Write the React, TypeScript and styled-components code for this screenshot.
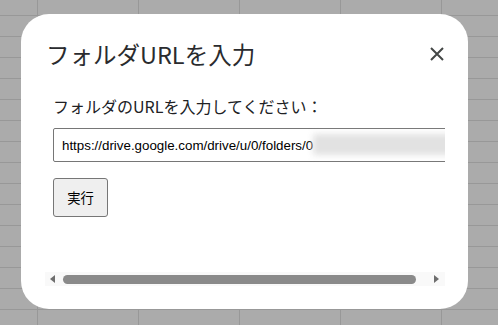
import React from "react";
import styled, { createGlobalStyle } from "styled-components";

const Global = createGlobalStyle`
  html, body { margin: 0; padding: 0; }
  body {
    width: 498px;
    height: 325px;
    overflow: hidden;
    background-color: #ababab;
    background-image:
      linear-gradient(to right, #989898 0 1px, transparent 1px),
      linear-gradient(to bottom, #989898 0 1px, transparent 1px);
    background-size: 101px 21px, 101px 21px;
    background-position: 37px 15px, 37px 15px;
    font-family: "Noto Sans CJK JP", "Noto Sans", sans-serif;
  }
`;

const Page = styled.div`
  width: 498px;
  height: 325px;
  box-sizing: border-box;
  padding: 14px 0 0 21px;
  display: flex;
  align-items: flex-start;
`;

const Dialog = styled.div`
  width: 447px;
  height: 295px;
  box-sizing: border-box;
  background: #fff;
  border-radius: 28px;
  padding: 24px 23px 23px 24px;
  display: flex;
  flex-direction: column;
`;

const Header = styled.div`
  height: 32px;
  display: flex;
  align-items: center;
  justify-content: space-between;
`;

const Title = styled.h2`
  margin: 0;
  padding-left: 1px;
  font-family: "Noto Sans CJK JP", sans-serif;
  font-weight: 400;
  font-size: 23.5px;
  line-height: 32px;
  color: #2a2b2e;
`;

const CloseButton = styled.button`
  width: 24px;
  height: 24px;
  padding: 0;
  margin-right: -4px;
  border: none;
  background: transparent;
  display: flex;
  align-items: center;
  justify-content: center;
  cursor: pointer;
`;

const Frame = styled.div`
  margin-top: 16px;
  flex: 1;
  display: flex;
  flex-direction: column;
  overflow: hidden;
`;

const Content = styled.div`
  flex: 1;
  overflow: hidden;
  padding: 8px;
`;

const Label = styled.p`
  margin: 0;
  font-family: "Noto Sans CJK JP", sans-serif;
  font-size: 16px;
  line-height: 24px;
  color: #202124;
  white-space: nowrap;
`;

const InputWrap = styled.div`
  position: relative;
  margin-top: 10px;
  width: 412px;
`;

const UrlInput = styled.input`
  display: block;
  width: 100%;
  height: 34px;
  box-sizing: border-box;
  border: 1px solid #767676;
  border-radius: 2px;
  padding: 0 8px;
  font-family: "Liberation Sans", Arial, sans-serif;
  font-size: 13.33px;
  color: #000;
  background: #fff;
  outline: none;
`;

const Redaction = styled.span`
  position: absolute;
  left: 260px;
  top: 6px;
  width: 140px;
  height: 21px;
  background: #e2e2e2;
  filter: blur(3px);
`;

const RunButton = styled.button`
  display: block;
  margin-top: 16px;
  width: 55px;
  height: 39px;
  box-sizing: border-box;
  background: #efefef;
  border: 1px solid #767676;
  border-radius: 3px;
  font-family: "Noto Sans CJK JP", sans-serif;
  font-size: 13.33px;
  color: #000;
  padding: 0;
`;

const ScrollBar = styled.div`
  height: 14px;
  flex: none;
  background: #f9f9f9;
  display: flex;
  align-items: center;
  padding: 0 6px 0 5px;
  gap: 8px;
`;

const Arrow = styled.span<{ $dir: "left" | "right" }>`
  width: 0;
  height: 0;
  border-top: 4px solid transparent;
  border-bottom: 4px solid transparent;
  ${(p) =>
    p.$dir === "left"
      ? "border-right: 5px solid #6e6e6e;"
      : "border-left: 5px solid #6e6e6e;"}
`;

const Track = styled.div`
  flex: 1;
  height: 9px;
  display: flex;
  padding-right: 10px;
`;

const Thumb = styled.div`
  flex: 1;
  height: 9px;
  border-radius: 5px;
  background: #8a8a8a;
`;

export default function App() {
  return (
    <>
      <Global />
      <Page>
        <Dialog>
          <Header>
            <Title>フォルダURLを入力</Title>
            <CloseButton aria-label="閉じる">
              <svg width="14" height="14" viewBox="0 0 14 14">
                <path d="M1 1 L13 13 M13 1 L1 13" stroke="#444746" strokeWidth="2" />
              </svg>
            </CloseButton>
          </Header>
          <Frame>
            <Content>
              <Label>フォルダのURLを入力してください：</Label>
              <InputWrap>
                <UrlInput readOnly value="https://drive.google.com/drive/u/0/folders/0" />
                <Redaction />
              </InputWrap>
              <RunButton>実行</RunButton>
            </Content>
            <ScrollBar>
              <Arrow $dir="left" />
              <Track>
                <Thumb />
              </Track>
              <Arrow $dir="right" />
            </ScrollBar>
          </Frame>
        </Dialog>
      </Page>
    </>
  );
}
